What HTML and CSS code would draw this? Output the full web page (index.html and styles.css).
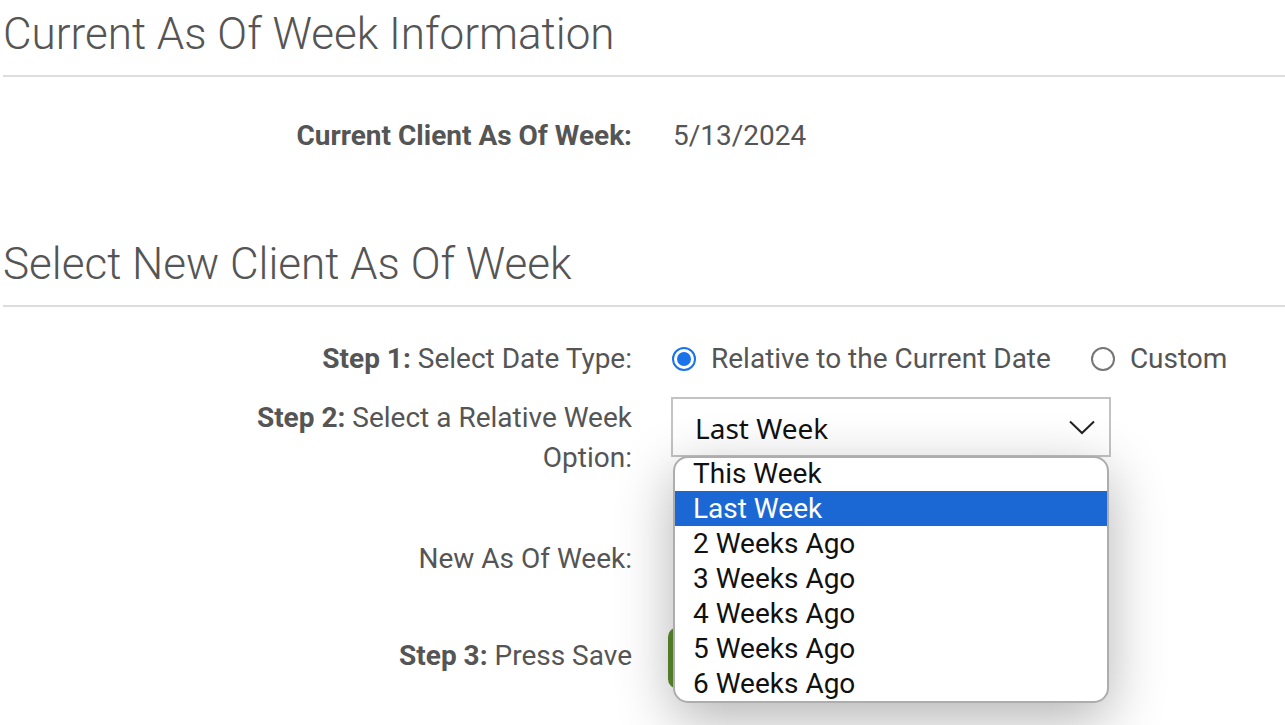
FILE: index.html
```html
<!DOCTYPE html>
<html lang="en">
<head>
<meta charset="utf-8">
<title>As Of Week</title>
<link rel="stylesheet" href="styles.css">
</head>
<body>
<div class="page">
  <section class="sec sec-current">
    <h2 class="sec-title">Current As Of Week Information</h2>
    <div class="row row-current">
      <div class="label"><b>Current Client As Of Week:</b></div>
      <div class="value">5/13/2024</div>
    </div>
  </section>

  <section class="sec sec-new">
    <h2 class="sec-title">Select New Client As Of Week</h2>
    <div class="row row-step1">
      <div class="label"><b>Step 1:</b> Select Date Type:</div>
      <div class="value radios">
        <label class="radio"><span class="dot checked"></span><span>Relative to the Current Date</span></label>
        <label class="radio"><span class="dot"></span><span>Custom</span></label>
      </div>
    </div>
    <div class="row row-step2">
      <div class="label"><b>Step 2:</b> Select a Relative Week Option:</div>
      <div class="value">
        <div class="select">
          <span class="select-text">Last Week</span>
          <svg class="chev" width="26" height="15" viewBox="0 0 26 15"><path d="M1 1.5 L13 13 L25 1.5" fill="none" stroke="#222" stroke-width="2"/></svg>
          <ul class="popup">
            <li>This Week</li>
            <li class="sel">Last Week</li>
            <li>2 Weeks Ago</li>
            <li>3 Weeks Ago</li>
            <li>4 Weeks Ago</li>
            <li>5 Weeks Ago</li>
            <li>6 Weeks Ago</li>
          </ul>
        </div>
      </div>
    </div>
    <div class="row row-new">
      <div class="label">New As Of Week:</div>
      <div class="value"></div>
    </div>
    <div class="row row-step3">
      <div class="label"><b>Step 3:</b> Press Save</div>
      <div class="value"><button class="save" aria-label="Save"></button></div>
    </div>
  </section>
</div>
</body>
</html>
```

FILE: styles.css
```css
html, body {
  margin: 0;
  padding: 0;
  background: #fff;
  overflow: hidden;
}
body {
  font-family: Roboto, "Liberation Sans", sans-serif;
  color: #555;
  width: 1285px;
  height: 725px;
}
.page {
  padding-top: 8px;
}
.sec-title {
  margin: 0 0 0 3px;
  padding: 0 0 14px 0;
  font-weight: 300;
  font-size: 44px;
  line-height: 53px;
  color: #555;
  border-bottom: 2px solid #ddd;
}
.row {
  display: flex;
  align-items: flex-start;
  font-size: 28px;
  line-height: 40px;
}
.label {
  width: 400px;
  margin-left: 232px;
  flex: none;
  text-align: right;
  color: #555;
}
.label b {
  font-weight: 700;
}
.value {
  margin-left: 39px;
  flex: none;
}
.row-current {
  margin-top: 39px;
}
.row-current .value {
  margin-left: 41px;
}
.sec-new {
  margin-top: 82px;
}
.row-step1 {
  margin-top: 32px;
}
.radios {
  display: flex;
  align-items: center;
  gap: 40px;
  margin-left: 40px;
  height: 40px;
}
.radio {
  display: flex;
  align-items: center;
  gap: 15px;
}
.dot {
  width: 24px;
  height: 24px;
  box-sizing: border-box;
  border: 2px solid #767676;
  border-radius: 50%;
  position: relative;
}
.dot.checked {
  border-color: #1a73e8;
}
.dot.checked::after {
  content: "";
  position: absolute;
  left: 3px;
  top: 3px;
  width: 14px;
  height: 14px;
  border-radius: 50%;
  background: #1a73e8;
}
.row-step2 {
  margin-top: 18px;
}
.row-step2 .label {
  padding-top: 1px;
}
.select {
  position: relative;
  width: 440px;
  height: 60px;
  box-sizing: border-box;
  border: 2px solid #c3c3c3;
  background: #fff;
  display: flex;
  align-items: center;
  justify-content: space-between;
  padding: 0 14px 0 22px;
}
.select-text {
  font-family: "Noto Sans", "Open Sans", sans-serif;
  font-size: 28px;
  color: #111;
  position: relative;
  top: 1px;
}
.chev {
  display: block;
}
.popup {
  position: absolute;
  z-index: 10;
  left: 0;
  top: 57px;
  width: 436px;
  box-sizing: border-box;
  margin: 0;
  padding: 0;
  list-style: none;
  background: #fff;
  border: 2px solid #adadad;
  border-radius: 15px;
  overflow: hidden;
  box-shadow: 0 16px 56px rgba(0, 0, 0, 0.3);
}
.popup li {
  font-family: Roboto, sans-serif;
  font-size: 28px;
  line-height: 35px;
  height: 35px;
  padding-left: 18px;
  color: #111;
}
.popup li:first-child {
  margin-top: -2px;
}
.popup li.sel {
  background: #1b67d3;
  color: #fff;
}
.row-new {
  margin-top: 61px;
}
.row-step3 {
  margin-top: 48px;
  align-items: center;
}
.row-step3 .label {
  position: relative;
  top: -2px;
}
.row-step3 .value {
  margin-left: 36px;
}
.save {
  display: block;
  height: 62px;
  width: 140px;
  border: none;
  border-radius: 10px;
  background: #5c8f2e;
}
```
